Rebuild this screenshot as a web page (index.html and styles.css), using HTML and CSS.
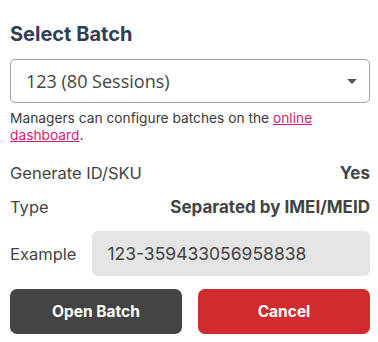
FILE: index.html
```html
<!DOCTYPE html>
<html>
<head>
<meta charset="utf-8">
<link rel="stylesheet" href="styles.css">
</head>
<body>
<div class="panel">
  <h1 class="title">Select Batch</h1>
  <div class="select">
    <span class="select-value">123 (80 Sessions)</span>
    <span class="caret"></span>
  </div>
  <p class="help">Managers can configure batches on the <a class="link" href="#">online dashboard</a>.</p>
  <div class="row first">
    <span class="label">Generate ID/SKU</span>
    <span class="value">Yes</span>
  </div>
  <div class="row">
    <span class="label">Type</span>
    <span class="value">Separated by IMEI/MEID</span>
  </div>
  <div class="row example">
    <span class="label">Example</span>
    <div class="field">123-359433056958838</div>
  </div>
  <div class="actions">
    <button class="btn btn-dark">Open Batch</button>
    <button class="btn btn-red">Cancel</button>
  </div>
</div>
</body>
</html>
```

FILE: styles.css
```css
html, body {
  margin: 0;
  padding: 0;
  background: #ffffff;
}
body {
  font-family: Inter, "Liberation Sans", sans-serif;
  color: #444444;
}
.panel {
  padding: 22px 8px 0 10px;
  display: flex;
  flex-direction: column;
}
.title {
  margin: 0;
  font-size: 20px;
  line-height: 24px;
  font-weight: 700;
  color: #2f4053;
}
.select {
  margin-top: 13px;
  height: 44px;
  box-sizing: border-box;
  border: 1px solid #a3a3a3;
  border-radius: 5px;
  display: flex;
  align-items: center;
  justify-content: space-between;
  padding: 0 12px 0 15px;
}
.select-value {
  font-family: "Open Sans", "Noto Sans", sans-serif;
  font-size: 18px;
  color: #444444;
}
.caret {
  width: 0;
  height: 0;
  border-left: 5px solid transparent;
  border-right: 5px solid transparent;
  border-top: 5px solid #555555;
}
.help {
  margin: 7px 0 0 0;
  font-size: 13.75px;
  line-height: 17px;
  color: #3a3a3a;
}
.link {
  color: #d81b72;
  text-decoration: underline;
}
.row {
  display: flex;
  justify-content: space-between;
  align-items: center;
  font-size: 16.5px;
  line-height: 20px;
  margin-top: 14px;
}
.row.first {
  margin-top: 19px;
}
.label {
  color: #444444;
}
.value {
  font-weight: 700;
  font-size: 17px;
  color: #444444;
}
.row.example {
  gap: 16px;
}
.field {
  flex: 1;
  height: 45px;
  box-sizing: border-box;
  background: #e5e5e5;
  border-radius: 6px;
  padding: 0 15px;
  display: flex;
  align-items: center;
  font-size: 17.5px;
  color: #444444;
}
.actions {
  margin-top: 13px;
  display: flex;
  gap: 16px;
}
.btn {
  flex: 1;
  height: 45px;
  border: none;
  border-radius: 7px;
  font-family: Inter, "Liberation Sans", sans-serif;
  font-size: 15.5px;
  font-weight: 700;
  color: #ffffff;
}
.btn-dark {
  background: #444444;
}
.btn-red {
  background: #d02c2f;
}
```
